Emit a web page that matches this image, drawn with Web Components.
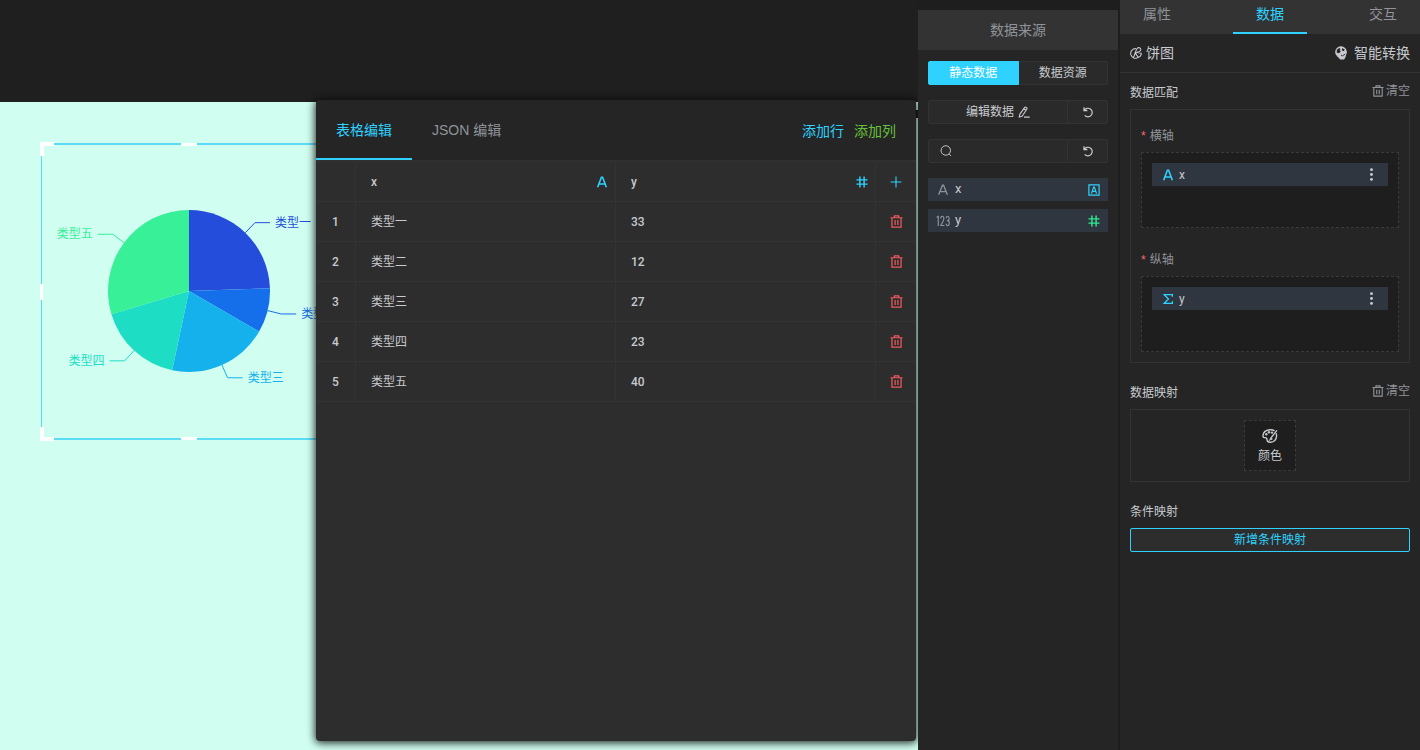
<!DOCTYPE html>
<html lang="zh-CN">
<head>
<meta charset="utf-8">
<title>数据配置</title>
<style>
  html, body { height: 100%; margin: 0; }
  body {
    --accent: #2fd2ff; --line: #333; --panel: #252525; --text: #c8cacf; --muted: #909399;
    --deep: #1e1e1e; --item: #303640; --surface: #2d2d2d;
    background: #1e1e1e; color: var(--text);
    font: 12px/16px "Liberation Sans", "Noto Sans CJK SC", sans-serif;
  }
</style>
</head>
<body>
<app-shell>
  <design-stage slot="stage">
    <pie-chart></pie-chart>
    <table-editor slot="dialog"></table-editor>
  </design-stage>
  <source-panel slot="source">
    <field-row icon="letter" label="x" type="boxed" tone="#2fd2ff"></field-row>
    <field-row icon="digits" label="y" type="hash" tone="#2ee88f"></field-row>
  </source-panel>
  <props-panel slot="props">
    <panel-section heading="数据匹配" clearable>
      <drop-zone label="横轴" icon="letterBold" field="x"></drop-zone>
      <drop-zone label="纵轴" icon="sigma" field="y"></drop-zone>
    </panel-section>
    <panel-section heading="数据映射" clearable>
      <color-tile></color-tile>
    </panel-section>
    <panel-section heading="条件映射" plain>
      <add-button>新增条件映射</add-button>
    </panel-section>
  </props-panel>
</app-shell>

<script>
const RESET = `
  :host, *, *::before, *::after { box-sizing: border-box; }
  button, input { font: inherit; color: inherit; margin: 0; padding: 0; border: 0; background: none; outline: 0; }
  button { cursor: pointer; }
  h2, h3 { margin: 0; font: inherit; }
`;
function define(name, render) {
  customElements.define(name, class extends HTMLElement {
    constructor() { super(); this.attachShadow({ mode: 'open' }); }
    connectedCallback() {
      const t = document.createElement('template');
      t.innerHTML = `<style>${RESET}</style>` + render(this);
      this.shadowRoot.replaceChildren(t.content.cloneNode(true));
    }
  });
}

const stroke = w => `fill="none" stroke="currentColor" stroke-width="${w}"`;
const ICONS = {
  letter: `<path ${stroke(1.5)} d="M3 13.5 7.4 2.5h1.2L13 13.5M4.5 9.8h7"/>`,
  letterBold: `<path ${stroke(2.1)} d="M2.2 15 7.2 1.6h1.6L13.8 15M4 10.6h8"/>`,
  digits: `<g ${stroke(1.3)} stroke-linejoin="round"><path d="M.8 4 2.6 2.4v11.4M5.4 5Q5.4 2.6 7.2 2.6T9 5Q9 7 5.4 13.2H9.5M11.6 4.6Q12 2.6 13.3 2.6 15 2.6 15 5 15 7.6 13 7.6 15.2 7.6 15.2 10.4T13.3 13.3Q11.6 13.3 11.4 11.2"/></g>`,
  sigma: `<path ${stroke(1.8)} d="M13.8 5V2.2H3L8.6 8 3 13.8h10.8V11"/>`,
  hash: `<path ${stroke(1.9)} d="M5.2.8v14.4M10.8.8v14.4M.6 5.2h14.8M.6 10.8h14.8"/>`,
  boxed: `<path ${stroke(1.6)} d="M1.2 1.2h13.6v13.6H1.2zM4.6 12.8 7.5 4h1l2.9 8.8M5.6 9.8h4.8"/>`,
  plus: `<path ${stroke(1.5)} d="M8 .8v14.4M.8 8h14.4"/>`,
  trash: `<path ${stroke(1.5)} d="M.6 3.4h14.8M5.3 3V1.2h5.4V3M2.4 3.6v11.2h11.2V3.6M6.3 6.2v6M9.7 6.2v6"/>`,
  refresh: `<path ${stroke(1.6)} d="M2.6 1.6v4.6h4.6M2.9 6A5.7 5.7 0 1 1 3.6 12.4"/>`,
  search: `<g ${stroke(1.3)}><circle cx="7.7" cy="7.3" r="6.3"/><path d="m12 11.8 2.6 2.8"/></g>`,
  edit: `<path ${stroke(1.5)} d="M2.3 11.2 8.7 2.2q1-1.3 2.4-.3 1.5 1 .6 2.4L5.4 13.6l-3.7 1zM7.9 3.8l2.9 2.1M8 14.8h7.6"/>`,
  more: `<g fill="currentColor"><circle cx="8" cy="2" r="1.8"/><circle cx="8" cy="8" r="1.8"/><circle cx="8" cy="14" r="1.8"/></g>`,
  pie: `<path ${stroke(1.4)} d="M8 2.2A6.4 6.4 0 1 0 11 13.8M7.2 8.2l3.8 5.6q4.2-1.6 4-5.6l-5-1M6.6 8.4 9.4 2q1.5-1.6 3.2-1 2 .7 1.8 2.8-.4 1.4-1.8 2.2zM7 8.5 4.6 14"/>`,
  globe: `<circle cx="8" cy="6.9" r="6.7" fill="currentColor"/><path fill="#252525" d="M3.2 4.4 6 2.3l1.5 1-1 1.5 1.4 1.1L5.8 8.4 3.2 7.8zM9.4 2.3l3 1.9-1.5 1.9-1.9-1.2z"/><path fill="currentColor" d="M4.5 10h8.8v2.5L11.5 15.4H7l-2.5-2.9z"/><path fill="none" stroke="#252525" stroke-width="1" d="M1.4 10.1 5.3 14.2M8 10.4l1.6.9 3.2-2"/>`,
  palette: `<path ${stroke(1.4)} d="M12.6 2.9Q10.6 1.5 7.7 1.8 1.2 2.6 1 7.7q-.1 2 2 1.9 2 0 2 2 .3 2.8 3.3 2.7 5.9-.4 6.3-6.3 0-1.5-.5-2.6M15 2.4 9.2 9.6l-1 2 2.2-1"/><g fill="currentColor"><circle cx="4.3" cy="6.3" r="1.2"/><circle cx="6.9" cy="4.3" r="1.2"/><circle cx="10" cy="4.6" r="1.2"/></g>`
};
define('ui-icon', el => `
  <style>:host { display: inline-block; flex: none; width: var(--size, 12px); height: var(--size, 12px); } svg { display: block; width: 100%; height: 100%; }</style>
  <svg viewBox="0 0 16 16" aria-hidden="true">${ICONS[el.getAttribute('name')]}</svg>`);

define('app-shell', () => `
  <style>
    :host { display: grid; grid-template-columns: minmax(0, 1fr) 200px 300px; min-height: 100vh; }
    main, aside { display: grid; grid-template-columns: minmax(0, 1fr); }
    :host { grid-template-columns: minmax(0, 1fr) 202px 300px; }
    .source { padding: 10px 2px 0 0; }
  </style>
  <main><slot name="stage"></slot></main>
  <aside class="source"><slot name="source"></slot></aside>
  <aside><slot name="props"></slot></aside>`);

define('design-stage', () => `
  <style>
    :host { display: flex; flex-direction: column; position: relative; overflow: hidden; }
    .bar { height: 102px; flex: none; background: #1f1f1f; }
    .board { flex: 1; position: relative; background: #d0fff1; }
    .board ::slotted(pie-chart) { position: absolute; left: 41px; top: 41px; }
    .notch { position: absolute; right: 0; top: 8px; width: 6px; height: 8px; background: #1f1f1f; }
    .dialog { position: absolute; right: 2px; top: 100px; bottom: 9px; width: 600px; display: grid; }
  </style>
  <div class="bar"></div>
  <div class="board"><slot></slot><span class="notch"></span></div>
  <div class="dialog"><slot name="dialog"></slot></div>`);

define('pie-chart', () => {
  const data = [['类型一', 33, '#244ddc'], ['类型二', 12, '#156eea'], ['类型三', 27, '#15b1ec'], ['类型四', 23, '#1ddec4'], ['类型五', 40, '#37f097']];
  const total = data.reduce((s, d) => s + d[1], 0), cx = 148, cy = 148, r = 81;
  const at = (a, k) => [cx + k * Math.sin(a), cy - k * Math.cos(a)];
  let from = 0, out = '';
  for (const [name, value, color] of data) {
    const to = from + value / total * 2 * Math.PI, mid = (from + to) / 2;
    const a = at(from, r), b = at(to, r), p = at(mid, r), q = at(mid, 95), dir = Math.sin(mid) > 0 ? 1 : -1;
    out += `<path fill="${color}" d="M${cx} ${cy}L${a}A${r} ${r} 0 0 1 ${b}Z"/>
      <polyline fill="none" stroke="${color}" points="${p} ${q} ${q[0] + dir * 15},${q[1]}"/>
      <text fill="${color}" x="${q[0] + dir * 20}" y="${q[1] + 4}" text-anchor="${dir > 0 ? 'start' : 'end'}">${name}</text>`;
    from = to;
  }
  return `
  <style>
    :host { display: block; width: 296px; height: 297px; border: solid #5cdcf5; border-width: 2px 1px; }
    .box { position: relative; width: 100%; height: 100%; }
    svg { display: block; position: absolute; left: -1px; top: -2px; width: 296px; height: 296px; overflow: visible; }
    i { position: absolute; background: #fff; }
    .t, .b { left: 139px; width: 16px; height: 3px; } .t { top: -2px; } .b { bottom: -2px; }
    .l { left: -2px; top: 139px; width: 3px; height: 16px; }
    .tl, .bl { left: -2px; width: 14px; height: 14px; background: none; border: 4px solid #fff; border-right: 0; }
    .tl { top: -3px; border-bottom: 0; } .bl { bottom: -3px; border-top: 0; }
  </style>
  <div class="box"><svg viewBox="0 0 296 296" font-size="12" role="img" aria-label="饼图">${out}</svg>
  <i class="t"></i><i class="b"></i><i class="l"></i><i class="tl"></i><i class="bl"></i></div>`;
});

define('table-editor', () => {
  const rows = [['类型一', 33], ['类型二', 12], ['类型三', 27], ['类型四', 23], ['类型五', 40]];
  return `
  <style>
    :host { display: flex; flex-direction: column; background: var(--surface); border-radius: 4px; box-shadow: 0 1px 8px 1px rgba(0,0,0,.85); overflow: hidden; }
    header { display: flex; height: 62px; background: var(--panel); border-bottom: 2px solid #303030; font-size: 14px; line-height: 20px; }
    .tab { padding: 2px 20px 0; color: var(--muted); border-bottom: 2px solid transparent; }
    .tab.on { color: var(--accent); border-color: var(--accent); }
    .acts { margin-left: auto; padding: 2px 20px 0 0; display: flex; gap: 10px; align-items: center; }
    .row { color: var(--accent); } .col { color: #67c23a; }
    table { width: 100%; table-layout: fixed; border-collapse: separate; border-spacing: 0; }
    th, td { height: 40px; padding: 0 14px 0 15px; border: solid var(--line); border-width: 0 1px 1px 0; text-align: left; font-weight: normal; }
    th:last-child, td:last-child { border-right: 0; }
    .n { padding: 0; text-align: center; width: 40px; }
    .v, .h { font-family: Roboto, sans-serif; font-weight: 500; }
    .h { display: flex; justify-content: space-between; align-items: center; margin-right: -7px; }
    .n button { display: flex; width: 100%; justify-content: center; }
    ui-icon { color: var(--accent); --size: 12px; }
    .del ui-icon { color: #f05b5b; --size: 13px; }
  </style>
  <header>
    <button class="tab on">表格编辑</button><button class="tab">JSON 编辑</button>
    <div class="acts"><button class="row">添加行</button><button class="col">添加列</button></div>
  </header>
  <table>
    <thead><tr><th class="n"></th>
      <th><div class="h">x<ui-icon name="letterBold"></ui-icon></div></th>
      <th><div class="h">y<ui-icon name="hash"></ui-icon></div></th>
      <th class="n"><button aria-label="添加列"><ui-icon name="plus"></ui-icon></button></th></tr></thead>
    <tbody>${rows.map(([a, b], i) => `<tr><td class="n v">${i + 1}</td><td>${a}</td><td class="v">${b}</td>
      <td class="n"><button class="del" aria-label="删除"><ui-icon name="trash"></ui-icon></button></td></tr>`).join('')}</tbody>
  </table>`;
});

define('source-panel', () => `
  <style>
    :host { display: block; background: var(--panel); }
    h2 { background: #333; color: var(--muted); font-size: 14px; line-height: 40px; text-align: center; }
    .body { padding: 11px 10px; display: grid; grid-template-columns: minmax(0, 1fr); gap: 15px; }
    .line { display: flex; height: 24px; }
    .line > * { border: 1px solid var(--line); background: #2a2a2a; display: flex; align-items: center; justify-content: center; gap: 4px; }
    .line > :first-child { border-radius: 2px 0 0 2px; } .line > :last-child { border-radius: 0 2px 2px 0; border-left: 0; }
    .seg > * { flex: 1; }
    .seg .on { background: var(--accent); border-color: var(--accent); color: #fff; }
    .grow { flex: 1; min-width: 0; } .sq { width: 40px; }
    label.grow { justify-content: flex-start; padding-left: 11px; }
    input { flex: 1; min-width: 0; }
    .list { display: grid; gap: 8px; }
    ui-icon { --size: 12px; }
  </style>
  <h2>数据来源</h2>
  <div class="body">
    <div class="line seg"><button class="on">静态数据</button><button>数据资源</button></div>
    <div class="line"><button class="grow">编辑数据<ui-icon name="edit"></ui-icon></button><button class="sq" aria-label="刷新数据"><ui-icon name="refresh"></ui-icon></button></div>
    <div class="line"><label class="grow"><ui-icon name="search"></ui-icon><input type="text" aria-label="搜索字段"></label><button class="sq" aria-label="重置"><ui-icon name="refresh"></ui-icon></button></div>
    <div class="list"><slot></slot></div>
  </div>`);

define('field-row', el => `
  <style>
    :host { display: flex; align-items: center; height: 23px; padding: 0 8px; background: var(--item); gap: 5px; }
    .k { color: var(--muted); --size: 14px; } .t { margin-left: auto; color: ${el.getAttribute('tone')}; --size: 12px; }
    span { font-family: Roboto, sans-serif; font-size: 13px; padding-bottom: 2px; }
  </style>
  <ui-icon class="k" name="${el.getAttribute('icon')}"></ui-icon><span>${el.getAttribute('label')}</span><ui-icon class="t" name="${el.getAttribute('type')}"></ui-icon>`);

define('props-panel', () => `
  <style>
    :host { display: block; background: var(--panel); font-size: 14px; line-height: 20px; }
    nav { display: flex; justify-content: space-between; height: 34px; background: #333; }
    nav button { width: 74px; color: var(--muted); padding-bottom: 4px; border-bottom: 2px solid transparent; }
    nav .on { color: var(--accent); border-color: var(--accent); }
    .kind { display: flex; justify-content: space-between; height: 39px; padding: 0 10px; border-bottom: 1px solid var(--line); }
    .kind > * { display: flex; align-items: center; }
    .kind span { gap: 4px; } .kind button { gap: 6px; }
    .kind ui-icon { --size: 12px; } .kind button ui-icon { --size: 14px; }
    .body { display: grid; gap: 10px; padding: 0 10px; font-size: 12px; line-height: 16px; }
  </style>
  <nav><button>属性</button><button class="on">数据</button><button>交互</button></nav>
  <div class="kind"><span><ui-icon name="pie"></ui-icon>饼图</span><button><ui-icon name="globe"></ui-icon>智能转换</button></div>
  <div class="body"><slot></slot></div>`);

define('panel-section', el => `
  <style>
    :host { display: block; }
    .head { display: flex; height: 36px; align-items: center; justify-content: space-between; }
    h3 { padding-top: 3px; }
    button { display: flex; align-items: center; gap: 2px; color: var(--muted); }
    .box { border: 1px solid var(--line); padding: 8px 10px 10px; display: grid; gap: 14px; }
    :host([plain]) .box { border: 0; padding: 0; }
  </style>
  <div class="head"><h3>${el.getAttribute('heading')}</h3>${el.hasAttribute('clearable') ? '<button><ui-icon name="trash"></ui-icon>清空</button>' : ''}</div>
  <div class="box"><slot></slot></div>`);

define('drop-zone', el => `
  <style>
    :host { display: block; }
    .label { height: 34px; line-height: 36px; color: var(--muted); display: flex; gap: 4px; }
    .label b { color: #f56c6c; font-weight: normal; }
    .zone { min-height: 76px; padding: 10px; border: 1px dashed #3a3a3a; background: var(--deep); }
    .item { display: flex; align-items: center; gap: 5px; height: 23px; padding: 0 10px; background: var(--item); font-family: Roboto, sans-serif; }
    .k { color: var(--accent); --size: 12px; }
    button { margin-left: auto; --size: 13px; display: flex; }
  </style>
  <div class="label"><b>*</b>${el.getAttribute('label')}</div>
  <div class="zone"><div class="item"><ui-icon class="k" name="${el.getAttribute('icon')}"></ui-icon>${el.getAttribute('field')}<button aria-label="更多"><ui-icon name="more"></ui-icon></button></div></div>`);

define('color-tile', () => `
  <style>
    :host { display: flex; justify-content: center; padding-top: 2px; }
    button { width: 52px; height: 51px; border: 1px dashed #3a3a3a; background: var(--deep); display: flex; flex-direction: column; align-items: center; justify-content: center; gap: 4px; --size: 16px; }
  </style>
  <button><ui-icon name="palette"></ui-icon>颜色</button>`);

define('add-button', () => `
  <style>
    :host { display: block; }
    button { width: 100%; height: 24px; border: 1px solid var(--accent); border-radius: 2px; background: var(--surface); color: var(--accent); }
  </style>
  <button><slot></slot></button>`);
</script>
</body>
</html>
